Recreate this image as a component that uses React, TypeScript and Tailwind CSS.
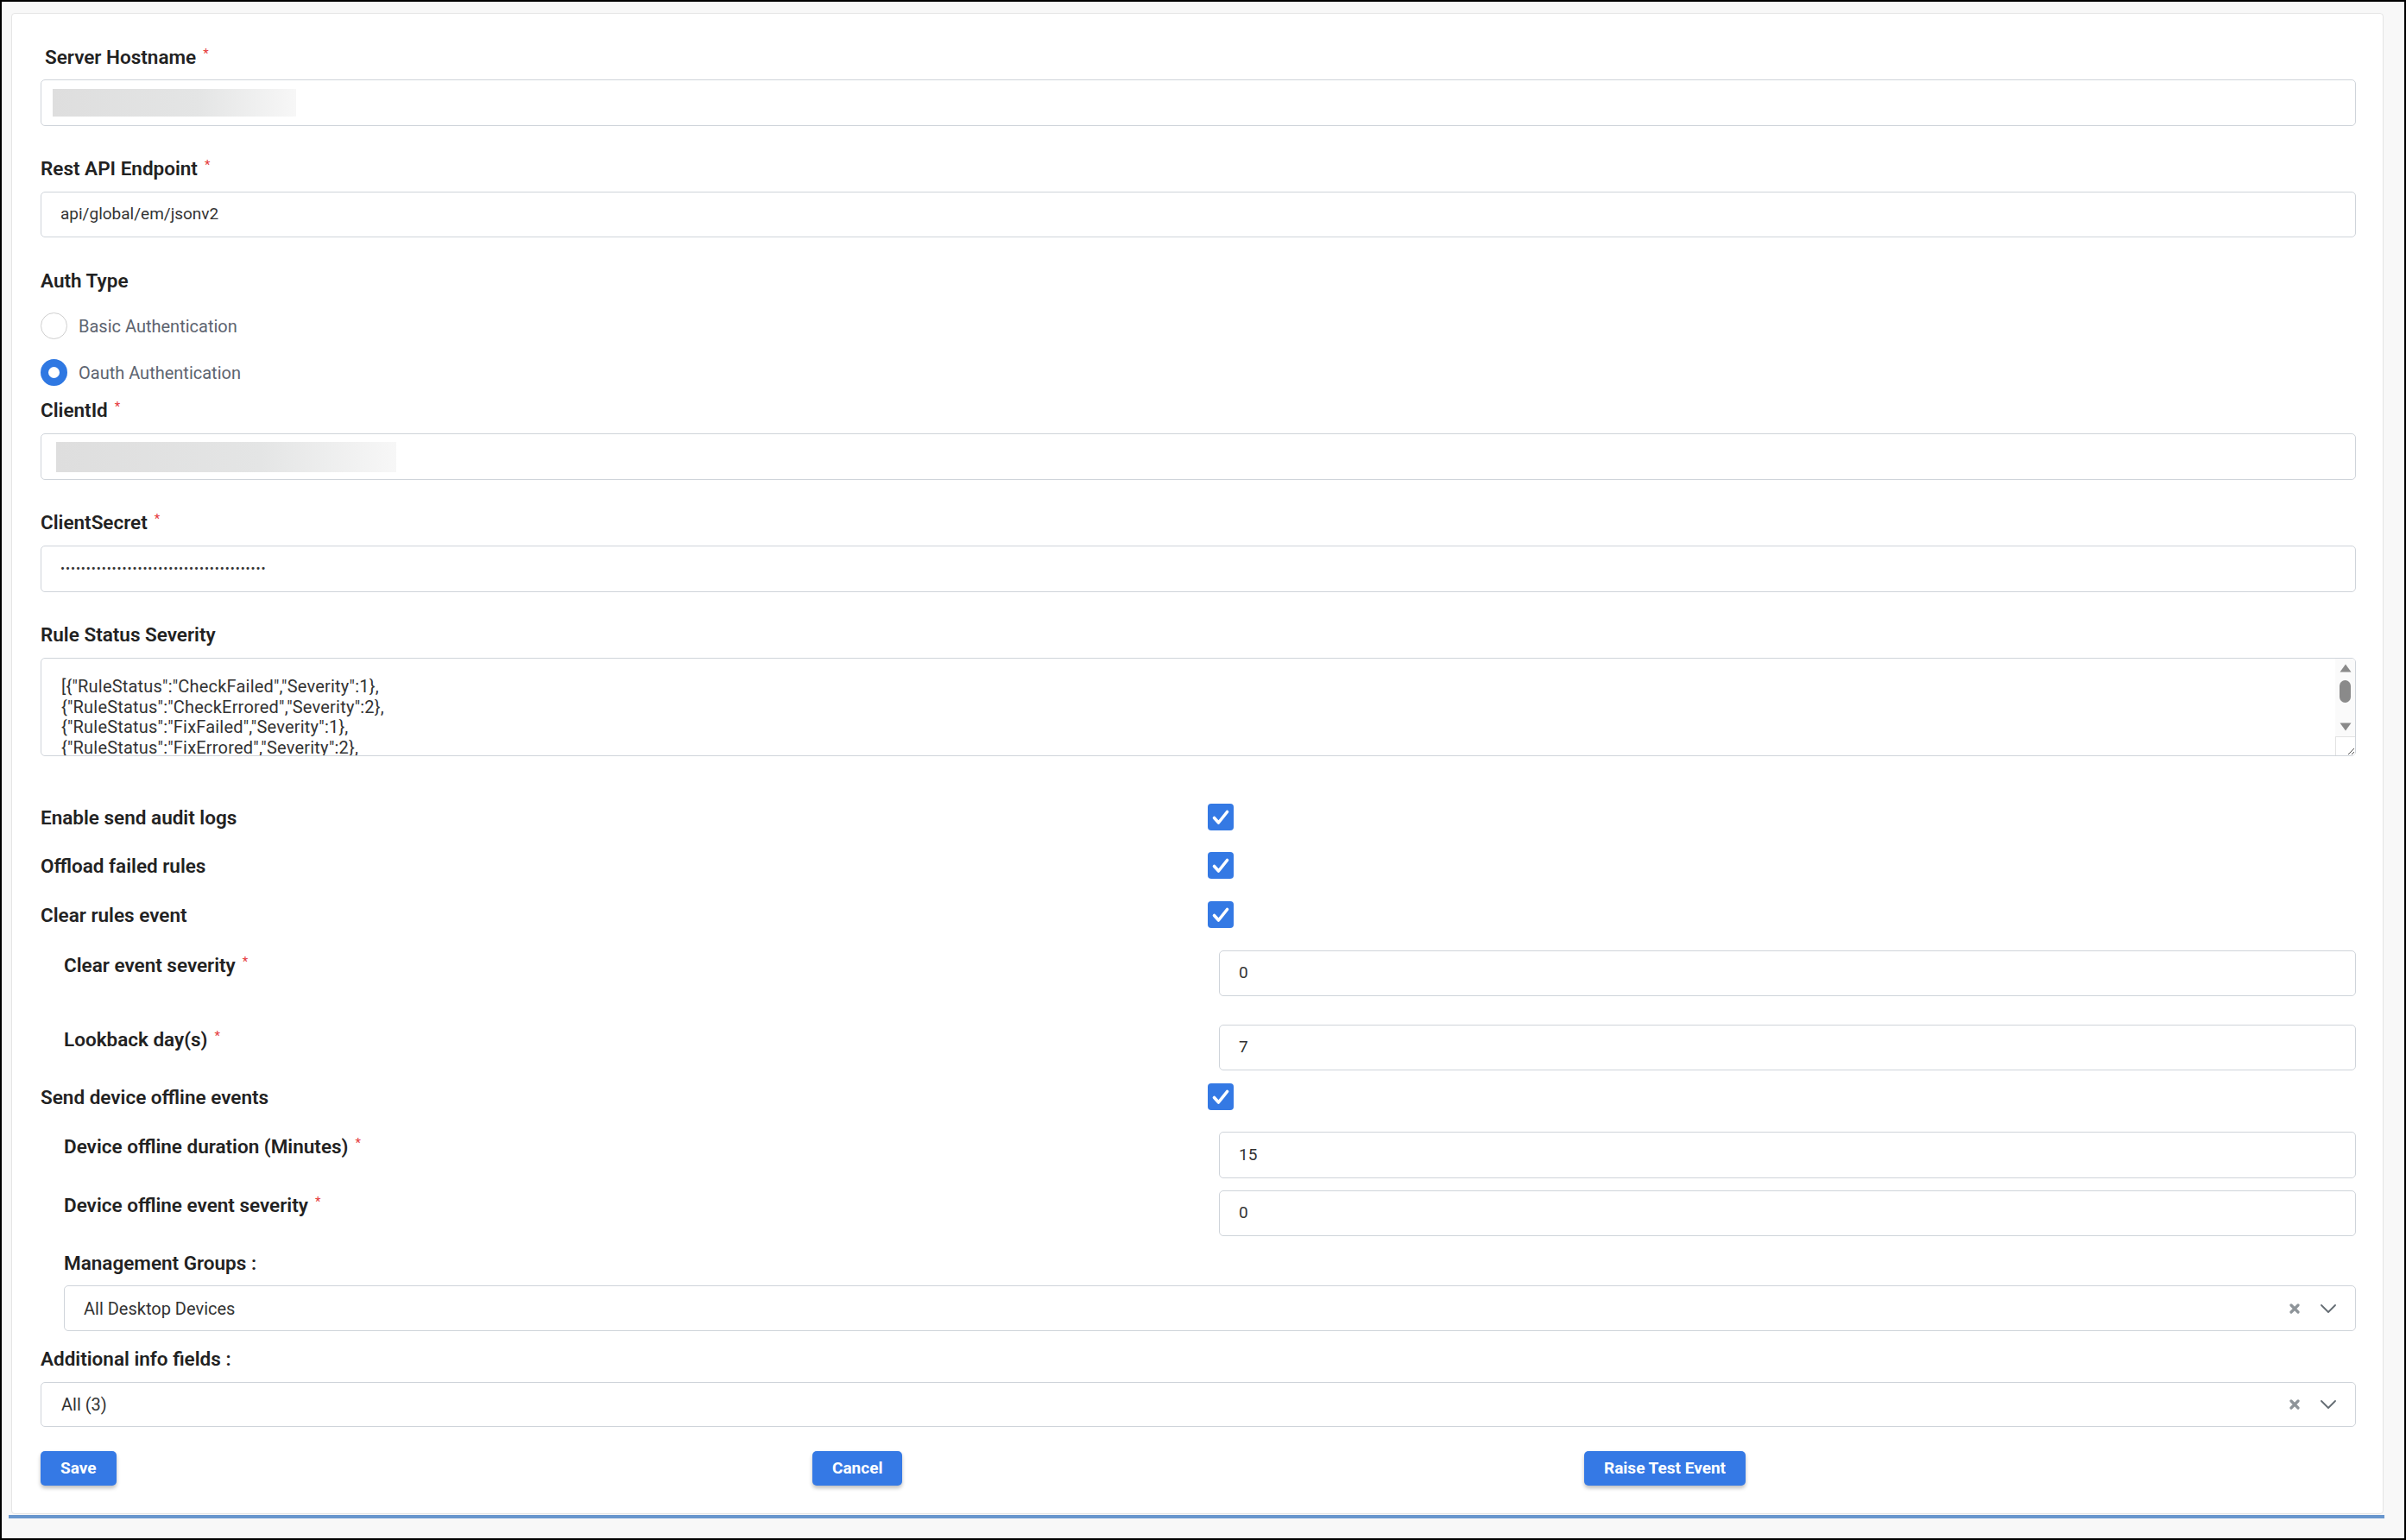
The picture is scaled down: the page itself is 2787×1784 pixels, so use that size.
import type { ReactNode } from 'react';

const RULE_SEVERITY = [
  '[{"RuleStatus":"CheckFailed","Severity":1},',
  '{"RuleStatus":"CheckErrored","Severity":2},',
  '{"RuleStatus":"FixFailed","Severity":1},',
  '{"RuleStatus":"FixErrored","Severity":2},',
];

function Label({ text, required, className = '' }: { text: string; required?: boolean; className?: string }) {
  return (
    <div className={`h-[28px] flex items-center text-[22.5px] leading-[28px] font-semibold text-[#222] ${className}`}>
      {text}
      {required && <span className="relative -top-[4px] ml-[8px] text-[15px] font-normal text-[#e5393a]">*</span>}
    </div>
  );
}

function TextBox({ children, className = '' }: { children?: ReactNode; className?: string }) {
  return (
    <div
      className={`flex items-center rounded-[5px] border border-[#cfd4da] bg-white pl-[22px] text-[19px] text-[#333] ${className}`}
    >
      {children}
    </div>
  );
}

// blurred-out value
function Redacted({ className = '' }: { className?: string }) {
  return <div className={`bg-linear-to-r from-[#dedede] via-[#e4e5e5] via-60% to-[#f7f7f7] ${className}`} />;
}

function Radio({ label, checked }: { label: string; checked?: boolean }) {
  return (
    <div className="flex h-[31px] items-center gap-[13px]">
      {checked ? (
        <span className="h-[31px] w-[31px] rounded-full border-[9px] border-[#2f78e2] bg-white" />
      ) : (
        <span className="h-[31px] w-[31px] rounded-full border border-[#cfcfcf] bg-white" />
      )}
      <span className="text-[20px] text-[#5d6470]">{label}</span>
    </div>
  );
}

function Checkbox() {
  return (
    <span className="flex h-[31px] w-[30px] items-center justify-center rounded-[4px] bg-[#3479e4]">
      <svg width="30" height="31" viewBox="0 0 30 31" fill="none">
        <path d="M7.5 16.5l5 5.5L22.5 9.5" stroke="white" strokeWidth="3.6" strokeLinecap="round" strokeLinejoin="round" />
      </svg>
    </span>
  );
}

function CheckRow({ label, className = '' }: { label: string; className?: string }) {
  return (
    <div className={`grid h-[31px] grid-cols-[1352px_1fr] items-center ${className}`}>
      <Label text={label} />
      <Checkbox />
    </div>
  );
}

function SubRow({ label, value, className = '', h = 'h-[53px]' }: { label: string; value: string; className?: string; h?: string }) {
  return (
    <div className={`grid grid-cols-[1338px_1fr] items-start pl-[27px] ${className}`}>
      <Label text={label} required className="mt-[3px]" />
      <TextBox className={h}>{value}</TextBox>
    </div>
  );
}

function MultiSelect({ value, className = '' }: { value: string; className?: string }) {
  return (
    <div
      className={`flex items-center rounded-[5px] border border-[#cfd4da] bg-white pl-[22px] pr-[22px] text-[20px] text-[#333] ${className}`}
    >
      <span className="flex-1">{value}</span>
      <svg width="12" height="12" viewBox="0 0 12 12">
        <path d="M2 2l8 8M10 2l-8 8" stroke="#8e9499" strokeWidth="3.2" strokeLinecap="round" />
      </svg>
      <svg className="ml-[24px]" width="18" height="10" viewBox="0 0 18 10" fill="none">
        <path d="M1 1l8 8 8-8" stroke="#646c73" strokeWidth="1.8" strokeLinecap="round" strokeLinejoin="round" />
      </svg>
    </div>
  );
}

function Button({ children }: { children: ReactNode }) {
  return (
    <button className="h-[40px] rounded-[5px] bg-[#3579e5] px-[23px] text-[19px] font-bold text-white shadow-[0_3px_4px_rgba(0,0,0,0.25)]">
      {children}
    </button>
  );
}

function SeverityArea() {
  return (
    <div className="mt-[13px] flex h-[114px] overflow-hidden rounded-[5px] border border-[#cfd4da] bg-white">
      <div className="flex-1 overflow-hidden pl-[23px] pt-[21px] text-[20px] leading-[23.5px] tracking-[0.2px] text-[#333]">
        {RULE_SEVERITY.map((line) => (
          <div key={line}>{line}</div>
        ))}
      </div>
      {/* scrollbar + resize grip */}
      <div className="flex w-[23px] flex-col items-center bg-[#fafafa] pt-[6px]">
        <svg width="14" height="10" viewBox="0 0 14 10">
          <path d="M7 0.5L13.5 9.5H0.5Z" fill="#8a8a8a" />
        </svg>
        <span className="mt-[9px] h-[26px] w-[13px] rounded-full bg-[#8a8a8a]" />
        <svg className="mt-[23px]" width="14" height="10" viewBox="0 0 14 10">
          <path d="M7 9.5L13.5 0.5H0.5Z" fill="#8a8a8a" />
        </svg>
        <div className="mt-[6px] flex h-[22px] w-[23px] items-end justify-end border-l border-t border-[#e2e2e2] bg-white">
          <svg width="10" height="10" viewBox="0 0 10 10">
            <path d="M9 2L2 9M9 6L6 9" stroke="#555" strokeWidth="1" />
          </svg>
        </div>
      </div>
    </div>
  );
}

export default function App() {
  return (
    <div className="h-[1784px] w-[2787px] border-2 border-black bg-[#f8f8f8] pl-[11px] pr-[24px] pt-[13px] font-[Roboto,'Liberation_Sans',sans-serif]">
      <div className="rounded-[4px] border border-[#e5e5e5] bg-white pb-[32px] pl-[33px] pr-[31px] pt-[36px]">
        <Label text="Server Hostname" required className="pl-[5px]" />
        <TextBox className="mt-[12px] h-[54px] !pl-[13px]">
          <Redacted className="h-[32px] w-[282px]" />
        </TextBox>

        <Label text="Rest API Endpoint" required className="mt-[35px]" />
        <TextBox className="mt-[13px] h-[53px]">api/global/em/jsonv2</TextBox>

        <Label text="Auth Type" className="mt-[36px]" />
        <div className="mt-[23px]">
          <Radio label="Basic Authentication" />
        </div>
        <div className="mt-[23px]">
          <Radio label="Oauth Authentication" checked />
        </div>

        <Label text="ClientId" required className="mt-[14px]" />
        <TextBox className="mt-[13px] h-[54px] !pl-[17px]">
          <Redacted className="h-[35px] w-[394px]" />
        </TextBox>

        <Label text="ClientSecret" required className="mt-[35px]" />
        <TextBox className="mt-[13px] h-[54px]">
          <span className="text-[15px] tracking-[0.9px]">{'•'.repeat(40)}</span>
        </TextBox>

        <Label text="Rule Status Severity" className="mt-[35px]" />
        <SeverityArea />

        <CheckRow label="Enable send audit logs" className="mt-[55px]" />
        <CheckRow label="Offload failed rules" className="mt-[25px]" />
        <CheckRow label="Clear rules event" className="mt-[26px]" />
        <SubRow label="Clear event severity" value="0" className="mt-[26px]" />
        <SubRow label="Lookback day(s)" value="7" className="mt-[33px]" />

        <CheckRow label="Send device offline events" className="mt-[15px]" />
        <SubRow label="Device offline duration (Minutes)" value="15" h="h-[54px]" className="mt-[25px]" />
        <SubRow label="Device offline event severity" value="0" className="mt-[14px]" />

        <Label text="Management Groups :" className="mt-[17px] pl-[27px]" />
        <MultiSelect value="All Desktop Devices" className="ml-[27px] mt-[12px] h-[53px]" />

        <Label text="Additional info fields :" className="mt-[18px]" />
        <MultiSelect value="All (3)" className="mt-[13px] h-[52px] !pl-[23px]" />

        <div className="mt-[28px] grid grid-cols-3">
          <div>
            <Button>Save</Button>
          </div>
          <div>
            <Button>Cancel</Button>
          </div>
          <div>
            <Button>Raise Test Event</Button>
          </div>
        </div>
      </div>
      <div className="-ml-[3px] mt-px h-[4px] w-[2752px] bg-[#6896cd]" />
    </div>
  );
}
